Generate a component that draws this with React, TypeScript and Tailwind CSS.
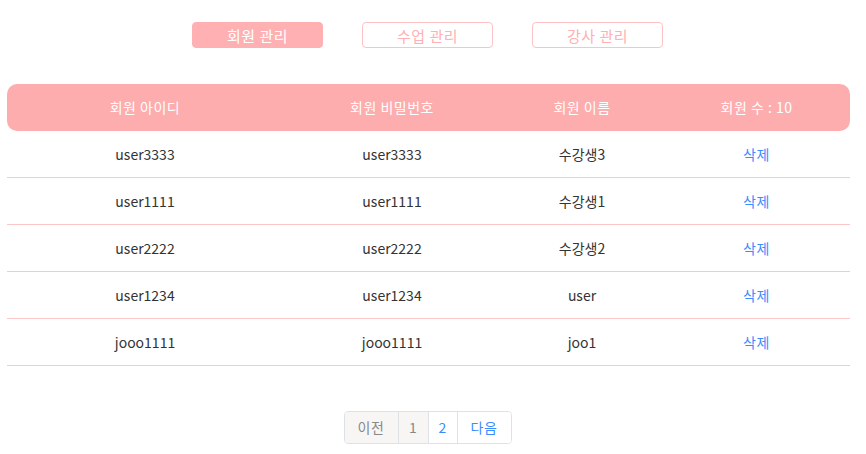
const members = [
  { id: "user3333", pw: "user3333", name: "수강생3" },
  { id: "user1111", pw: "user1111", name: "수강생1" },
  { id: "user2222", pw: "user2222", name: "수강생2" },
  { id: "user1234", pw: "user1234", name: "user" },
  { id: "jooo1111", pw: "jooo1111", name: "joo1" },
];

const tabs = [
  { label: "회원 관리", active: true },
  { label: "수업 관리", active: false },
  { label: "강사 관리", active: false },
];

export default function App() {
  return (
    <div className="min-h-[454px] w-[855px] bg-white font-['Noto_Sans_CJK_KR',sans-serif] text-[14px] text-[#333]">
      {/* admin tabs */}
      <div className="flex justify-center gap-[39px] pt-[22px]">
        {tabs.map((t) => (
          <button
            key={t.label}
            className={`h-[26px] w-[131px] rounded-[4px] border text-[15px] leading-none tracking-[0.5px] ${
              t.active
                ? "border-[#ffb0b3] bg-[#ffb0b3] text-white"
                : "border-[#ffc2c4] bg-white text-[#ffb0b3]"
            }`}
          >
            {t.label}
          </button>
        ))}
      </div>

      {/* member table */}
      <div className="ml-[7px] mt-[36px] w-[843px]">
        <div className="grid h-[47px] grid-cols-[276px_218px_162px_187px] items-center rounded-[10px] bg-[#fdadae] text-center tracking-[0.5px] text-white">
          <span>회원 아이디</span>
          <span>회원 비밀번호</span>
          <span>회원 이름</span>
          <span>회원 수 : 10</span>
        </div>
        {members.map((m) => (
          <div
            key={m.id}
            className="grid h-[47px] grid-cols-[276px_218px_162px_187px] items-center border-b border-[#fcc6c7] text-center"
          >
            <span>{m.id}</span>
            <span>{m.pw}</span>
            <span>{m.name}</span>
            <span className="tracking-[0.5px] text-[#3b8cff]">삭제</span>
          </div>
        ))}
      </div>

      {/* pagination */}
      <div className="mt-[45px] flex justify-center">
        <div className="flex h-[33px] overflow-hidden rounded-[4px] border border-[#dee2e6] text-[14px]">
          <span className="flex w-[53px] items-center justify-center bg-[#f7f6f5] tracking-[0.5px] text-[#888]">이전</span>
          <span className="flex w-[30px] items-center justify-center border-l border-[#dee2e6] bg-[#f7f6f5] text-[#888]">1</span>
          <span className="flex w-[29px] items-center justify-center border-l border-[#dee2e6] bg-white text-[#3b8cff]">2</span>
          <span className="flex w-[54px] items-center justify-center border-l border-[#dee2e6] bg-white tracking-[0.5px] text-[#3b8cff]">다음</span>
        </div>
      </div>
    </div>
  );
}
